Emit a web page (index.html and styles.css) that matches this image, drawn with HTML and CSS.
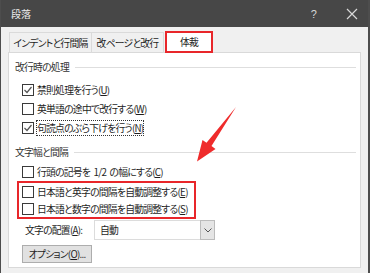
FILE: index.html
```html
<!DOCTYPE html>
<html lang="ja">
<head>
    <meta charset="UTF-8">
    <title>段落</title>
    <link rel="stylesheet" href="styles.css">
</head>
<body>
    <div class="window">
        <div class="titlebar">
            <span class="title">段落</span>
            <span class="help">?</span>
            <span class="close">
                <svg width="12" height="12" viewBox="0 0 12 12"><path d="M1 1L11 11M11 1L1 11" stroke="#d8d8d8" stroke-width="1.2"/></svg>
            </span>
        </div>
        <div class="tabs">
            <div class="tab">インデントと行間隔</div>
            <div class="tab">改ページと改行</div>
            <div class="tab active">体裁</div>
        </div>
        <div class="panel">
            <div class="heading"><span>改行時の処理</span></div>
            <div class="row">
                <span class="box checked"><svg width="10" height="10" viewBox="0 0 10 10"><path d="M1.5 5L4 7.5L8.5 2" fill="none" stroke="#555" stroke-width="1.2"/></svg></span>
                <span>禁則処理を行う(<u>U</u>)</span>
            </div>
            <div class="row">
                <span class="box"></span>
                <span>英単語の途中で改行する(<u>W</u>)</span>
            </div>
            <div class="row">
                <span class="box checked"><svg width="10" height="10" viewBox="0 0 10 10"><path d="M1.5 5L4 7.5L8.5 2" fill="none" stroke="#555" stroke-width="1.2"/></svg></span>
                <span class="focus">句読点のぶら下げを行う(<u>N</u>)</span>
            </div>

            <div class="heading second"><span>文字幅と間隔</span></div>
            <div class="row">
                <span class="box"></span>
                <span>行頭の記号を 1/2 の幅にする(<u>C</u>)</span>
            </div>
            <div class="marked">
                <div class="row">
                    <span class="box"></span>
                    <span>日本語と英字の間隔を自動調整する(<u>E</u>)</span>
                </div>
                <div class="row">
                    <span class="box"></span>
                    <span>日本語と数字の間隔を自動調整する(<u>S</u>)</span>
                </div>
            </div>

            <div class="align-row">
                <span class="label">文字の配置(<u>A</u>):</span>
                <div class="select">
                    <span class="value">自動</span>
                    <span class="arrow"><svg width="8" height="5" viewBox="0 0 8 5"><path d="M0.5 0.5L4 4L7.5 0.5" fill="none" stroke="#555" stroke-width="1"/></svg></span>
                </div>
            </div>
            <div class="button">オプション(<u>O</u>)...</div>
        </div>
        <svg class="pointer" width="371" height="273" viewBox="0 0 371 273">
            <polygon points="236,107 211.5,146 215.5,149 197,161.5 202.5,140 206.5,142.8" fill="#ef2b2b"/>
        </svg>
    </div>
</body>
</html>
```

FILE: styles.css
```css
body {
    margin: 0;
    background: #fff;
    font-family: "Noto Sans CJK JP", "Noto Sans", sans-serif;
    font-feature-settings: "palt";
    font-size: 9.8px;
    letter-spacing: -0.75px;
    word-spacing: 2px;
    white-space: nowrap;
    color: #1e1e1e;
}

.window {
    position: relative;
    width: 370px;
    height: 273px;
    box-sizing: border-box;
    background: #f0f0f0;
    border-left: 1px solid #4d4d4d;
    border-right: 2px solid #4d4d4d;
    overflow: hidden;
}

.titlebar {
    height: 27px;
    background: #474747;
    color: #ececec;
    display: flex;
    align-items: center;
    padding-left: 10px;
}

.title {
    font-size: 10px;
    letter-spacing: 0;
}

.help {
    margin-left: auto;
    font-family: "Liberation Sans", sans-serif;
    font-size: 11px;
    color: #d8d8d8;
}

.close {
    display: flex;
    margin: 0 10px 0 30px;
}

.tabs {
    display: flex;
    margin: 4px 0 0 8px;
    height: 22px;
}

.tab {
    display: flex;
    align-items: center;
    justify-content: center;
    box-sizing: border-box;
    border: 1px solid #dadada;
    border-bottom: none;
    margin-top: 1px;
    width: 83px;
}

.tab + .tab {
    margin-left: -1px;
    width: 73px;
}

.tab.active {
    margin-top: 0;
    margin-left: 1px;
    width: 48px;
    background: #fff;
    border: 2px solid #e8262a;
    position: relative;
    z-index: 1;
}

.panel {
    margin: -1px 7px 0 7px;
    height: 216px;
    box-sizing: border-box;
    background: #fff;
    border: 1px solid #d9d9d9;
    padding-top: 6px;
}

.heading {
    display: flex;
    align-items: center;
    height: 16px;
    padding-left: 6px;
    margin-right: 4px;
    margin-bottom: 5px;
    color: #333;
}

.heading::after {
    content: "";
    flex: 1;
    height: 1px;
    background: #dedede;
    margin-left: 6px;
}

.heading.second {
    margin-top: 7px;
    margin-bottom: 2px;
}

.row {
    display: flex;
    align-items: center;
    height: 19px;
    padding-left: 13px;
}

.box {
    flex: none;
    width: 10px;
    height: 10px;
    border: 1px solid #3a3a3a;
    background: #fff;
    margin-right: 3px;
    display: flex;
}

.focus {
    outline: 1px dotted #333;
    outline-offset: 0;
}

.marked {
    width: 179px;
    box-sizing: border-box;
    margin-left: 8px;
    border: 2px solid #e8262a;
}

.marked .row {
    height: 17px;
    padding-left: 3px;
}

.align-row {
    display: flex;
    align-items: center;
    margin-top: 1px;
    height: 20px;
    padding-left: 16px;
}

.label {
    width: 69px;
}

.select {
    display: flex;
    width: 121px;
    height: 20px;
    box-sizing: border-box;
    border: 1px solid #dcdcdc;
    border-right: none;
}

.value {
    flex: 1;
    padding-left: 5px;
    line-height: 18px;
}

.arrow {
    width: 15px;
    box-sizing: border-box;
    border: 1px solid #bcbcbc;
    margin: -1px 0;
    background: #e5e5e5;
    display: flex;
    align-items: center;
    justify-content: center;
}

.button {
    margin: 5px 0 0 13px;
    width: 70px;
    height: 18px;
    box-sizing: border-box;
    background: #e1e1e1;
    border: 1px solid #adadad;
    display: flex;
    align-items: center;
    justify-content: center;
}

.pointer {
    position: absolute;
    left: -1px;
    top: 0;
}
```
